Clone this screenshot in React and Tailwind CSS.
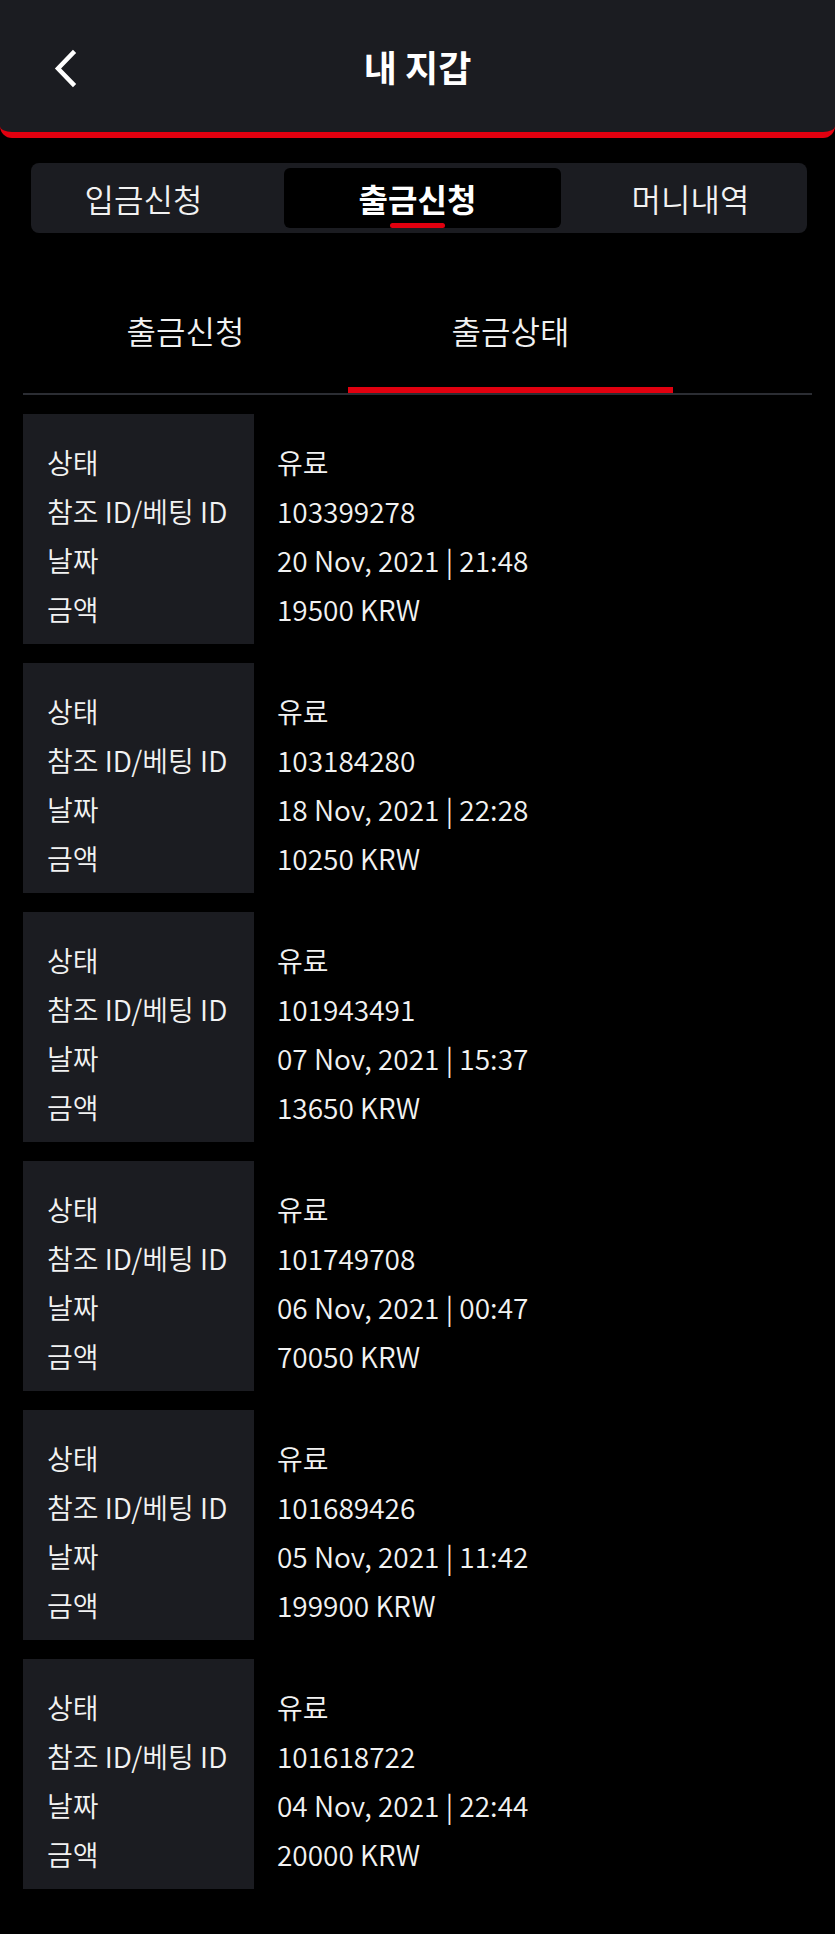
import { useState } from "react";

const records = [
  { id: "103399278", date: "20 Nov, 2021 | 21:48", amount: "19500 KRW" },
  { id: "103184280", date: "18 Nov, 2021 | 22:28", amount: "10250 KRW" },
  { id: "101943491", date: "07 Nov, 2021 | 15:37", amount: "13650 KRW" },
  { id: "101749708", date: "06 Nov, 2021 | 00:47", amount: "70050 KRW" },
  { id: "101689426", date: "05 Nov, 2021 | 11:42", amount: "199900 KRW" },
  { id: "101618722", date: "04 Nov, 2021 | 22:44", amount: "20000 KRW" },
];

function App() {
  const [subTab, setSubTab] = useState("status");

  return (
    <div
      className="min-h-screen bg-black text-[#f2f2f2] pb-[46px]"
      style={{ fontFamily: '"Noto Sans CJK KR", "Noto Sans", sans-serif' }}
    >
      {/* Header */}
      <div className="relative h-[138px] bg-[#1b1c21] border-b-[6px] border-[#e1000f] rounded-b-[12px] flex items-center justify-center">
        <button className="absolute left-[50px] top-[48px] w-[30px] h-[42px] flex items-center justify-center">
          <svg width="26" height="40" viewBox="0 0 26 40" fill="none">
            <path
              d="M21 4 L6 19.5 L21 35"
              stroke="white"
              strokeWidth="4.5"
              strokeLinecap="square"
              strokeLinejoin="miter"
            />
          </svg>
        </button>
        <h1 className="text-[36px] font-bold text-white leading-none">내 지갑</h1>
      </div>

      {/* Main tabs */}
      <div className="mt-[25px] ml-[31px] mr-[28px] h-[70px] p-[5px] rounded-[8px] bg-[#1b1c21] flex text-[32px] font-[350]">
        <div className="w-[215px] flex items-center justify-center">입금신청</div>
        <div className="relative w-[277px] ml-[33px] rounded-[6px] bg-black flex items-center justify-center pr-[10px] font-bold text-white">
          출금신청
          <span className="absolute bottom-0 left-[106px] w-[55px] h-[5px] rounded-full bg-[#e1000f]" />
        </div>
        <div className="flex-1 flex items-center justify-center pl-[18px]">머니내역</div>
      </div>

      {/* Sub tabs */}
      <div className="mt-[40px] mx-[23px] flex border-b-2 border-[#2b2d33] text-[32px] font-[350]">
        <button
          onClick={() => setSubTab("request")}
          className="w-[325px] h-[120px] flex flex-col"
        >
          <span className="flex-1 flex items-center justify-center">출금신청</span>
          <span className={`h-[6px] ${subTab === "request" ? "bg-[#e1000f]" : ""}`} />
        </button>
        <button
          onClick={() => setSubTab("status")}
          className="w-[325px] h-[120px] flex flex-col"
        >
          <span className="flex-1 flex items-center justify-center">출금상태</span>
          <span className={`h-[6px] ${subTab === "status" ? "bg-[#e1000f]" : ""}`} />
        </button>
      </div>

      {/* Records */}
      <div className="mt-[19px] ml-[23px] flex flex-col gap-[19px] text-[28px] leading-[49px] font-[350]">
        {records.map((r) => (
          <div key={r.id} className="flex h-[230px]">
            <div className="w-[231px] bg-[#1b1c21] pl-[24px] pt-[24px]">
              <p>상태</p>
              <p>참조 ID/베팅 ID</p>
              <p>날짜</p>
              <p>금액</p>
            </div>
            <div className="pl-[23px] pt-[24px]">
              <p>유료</p>
              <p>{r.id}</p>
              <p>{r.date}</p>
              <p>{r.amount}</p>
            </div>
          </div>
        ))}
      </div>
    </div>
  );
}

export default App;
